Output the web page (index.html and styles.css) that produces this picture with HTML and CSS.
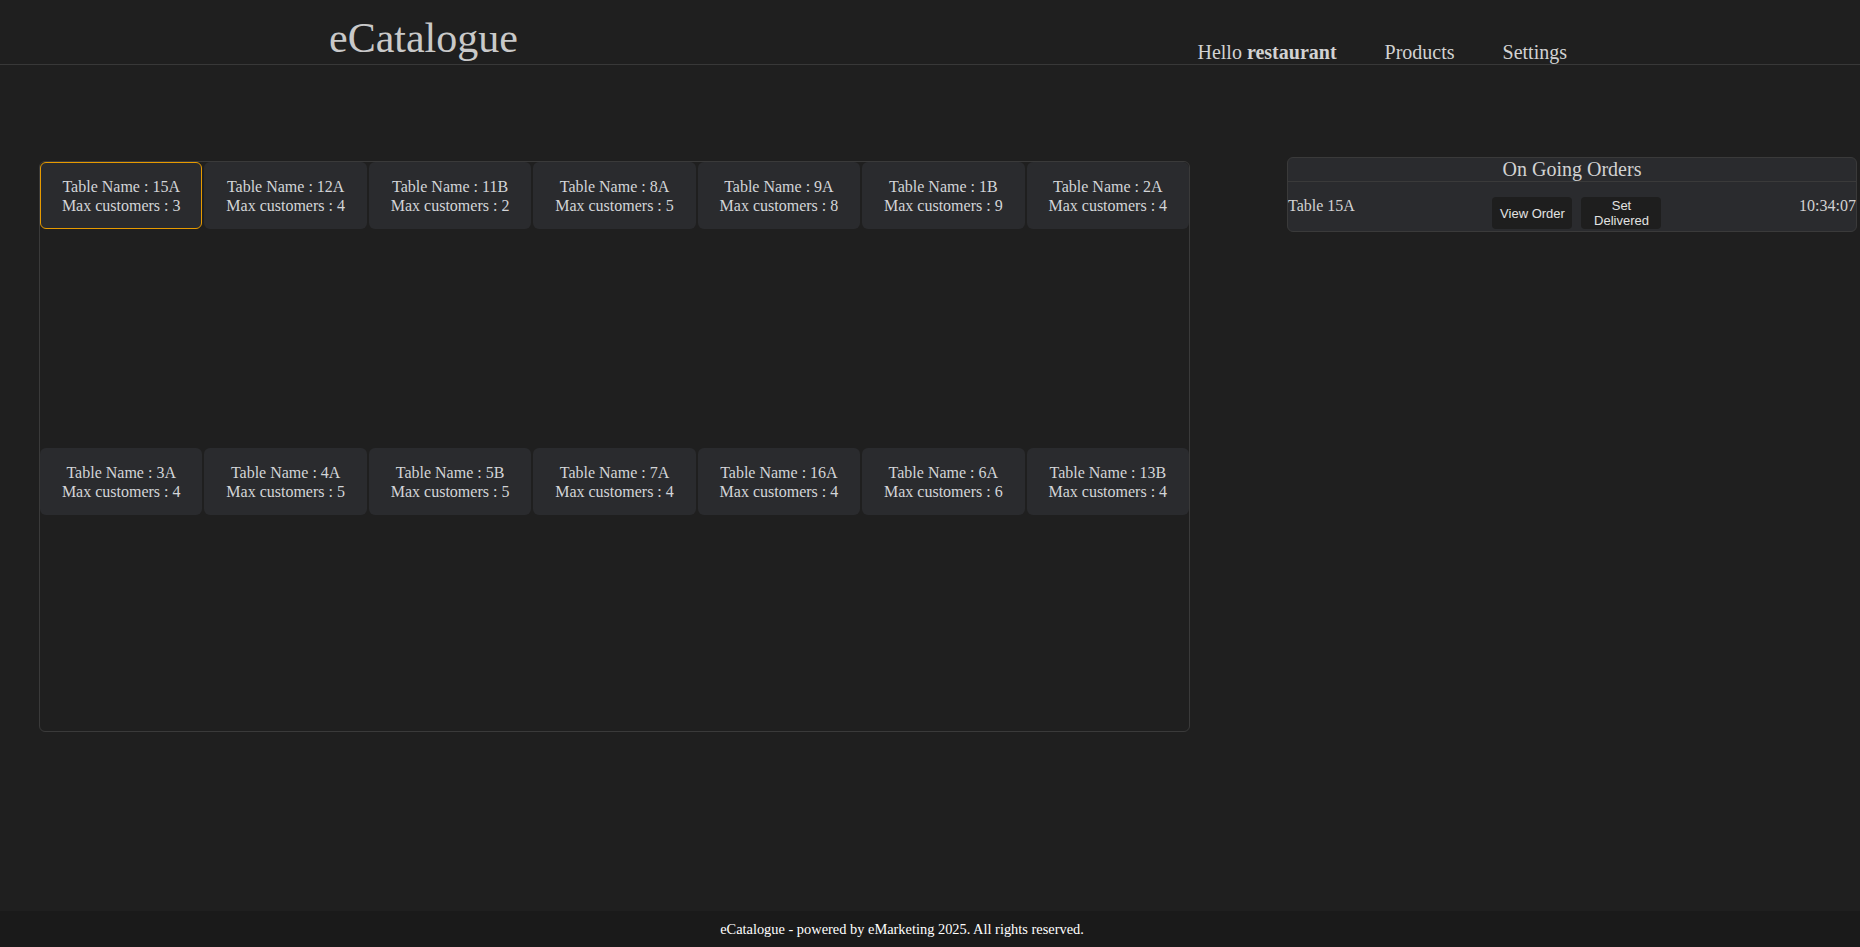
FILE: index.html
```html
<!DOCTYPE html>
<html lang="en">
<head>
<meta charset="utf-8">
<title>eCatalogue</title>
<link rel="stylesheet" href="styles.css">
</head>
<body>
<header class="topbar">
  <div class="brand">eCatalogue</div>
  <nav class="nav">
    <span class="nav-item">Hello <b>restaurant</b></span>
    <span class="nav-item">Products</span>
    <span class="nav-item">Settings</span>
  </nav>
</header>
<main class="main">
  <section class="tables">
    <div class="card selected">Table Name : 15A<br>Max customers : 3</div>
    <div class="card">Table Name : 12A<br>Max customers : 4</div>
    <div class="card">Table Name : 11B<br>Max customers : 2</div>
    <div class="card">Table Name : 8A<br>Max customers : 5</div>
    <div class="card">Table Name : 9A<br>Max customers : 8</div>
    <div class="card">Table Name : 1B<br>Max customers : 9</div>
    <div class="card">Table Name : 2A<br>Max customers : 4</div>
    <div class="card">Table Name : 3A<br>Max customers : 4</div>
    <div class="card">Table Name : 4A<br>Max customers : 5</div>
    <div class="card">Table Name : 5B<br>Max customers : 5</div>
    <div class="card">Table Name : 7A<br>Max customers : 4</div>
    <div class="card">Table Name : 16A<br>Max customers : 4</div>
    <div class="card">Table Name : 6A<br>Max customers : 6</div>
    <div class="card">Table Name : 13B<br>Max customers : 4</div>
  </section>
  <aside class="orders">
    <div class="orders-title">On Going Orders</div>
    <div class="order-row">
      <span class="order-name">Table 15A</span>
      <div class="order-actions">
        <button class="btn">View Order</button>
        <button class="btn">Set Delivered</button>
      </div>
      <span class="order-time">10:34:07</span>
    </div>
  </aside>
</main>
<footer class="footer">eCatalogue - powered by eMarketing 2025. All rights reserved.</footer>
</body>
</html>
```
FILE: styles.css
```css
html, body {
  margin: 0;
  padding: 0;
}
body {
  background: #1f1f1f;
  color: #d2d2d2;
  font-family: "Liberation Serif", "Times New Roman", serif;
  min-height: 100vh;
  display: flex;
  flex-direction: column;
}
.topbar {
  box-sizing: border-box;
  height: 65px;
  border-bottom: 1px solid #383838;
  display: flex;
  align-items: flex-end;
}
.brand {
  font-size: 42px;
  color: #c9c9c9;
  margin-left: 329px;
  margin-bottom: 2px;
}
.nav {
  margin-left: auto;
  margin-right: 269px;
  display: flex;
  font-size: 20px;
  color: #d2d2d2;
}
.nav-item {
  padding: 0 24px;
}
.main {
  flex: 1;
  display: flex;
  justify-content: space-between;
  align-items: flex-start;
  padding: 92px 3px 0 39px;
}
.tables {
  box-sizing: border-box;
  width: 1151px;
  height: 571px;
  margin-top: 4px;
  border: 1px solid #3a3a3a;
  border-radius: 6px;
  display: grid;
  grid-template-columns: repeat(7, 1fr);
  grid-template-rows: repeat(2, 1fr);
  gap: 2px;
  align-items: start;
}
.card {
  background: #2a2b2e;
  border: 1px solid transparent;
  border-radius: 6px;
  padding: 14px 0 13px;
  line-height: 19px;
  text-align: center;
  font-size: 16px;
  color: #d3d5d8;
}
.card.selected {
  border-color: #e69a00;
}
.orders {
  box-sizing: border-box;
  width: 570px;
  background: #2a2b2e;
  border: 1px solid #3a3a3a;
  border-radius: 6px;
}
.orders-title {
  font-size: 20px;
  line-height: 23px;
  text-align: center;
  border-bottom: 1px solid #3a3a3a;
  color: #d2d2d2;
}
.order-row {
  display: flex;
  justify-content: space-between;
  align-items: flex-start;
  padding: 15px 0 2px;
  font-size: 16px;
}
.order-actions {
  display: flex;
  gap: 9px;
  align-items: stretch;
}
.btn {
  width: 80px;
  padding: 1px 6px;
  border: none;
  border-radius: 4px;
  background: #1e1e1e;
  color: #e2e2e2;
  font-family: "Liberation Sans", Arial, sans-serif;
  font-size: 13px;
}
.footer {
  box-sizing: border-box;
  height: 36px;
  padding-right: 56px;
  background: #1a1a1a;
  color: #ffffff;
  font-size: 14.4px;
  display: flex;
  align-items: center;
  justify-content: center;
}
```
